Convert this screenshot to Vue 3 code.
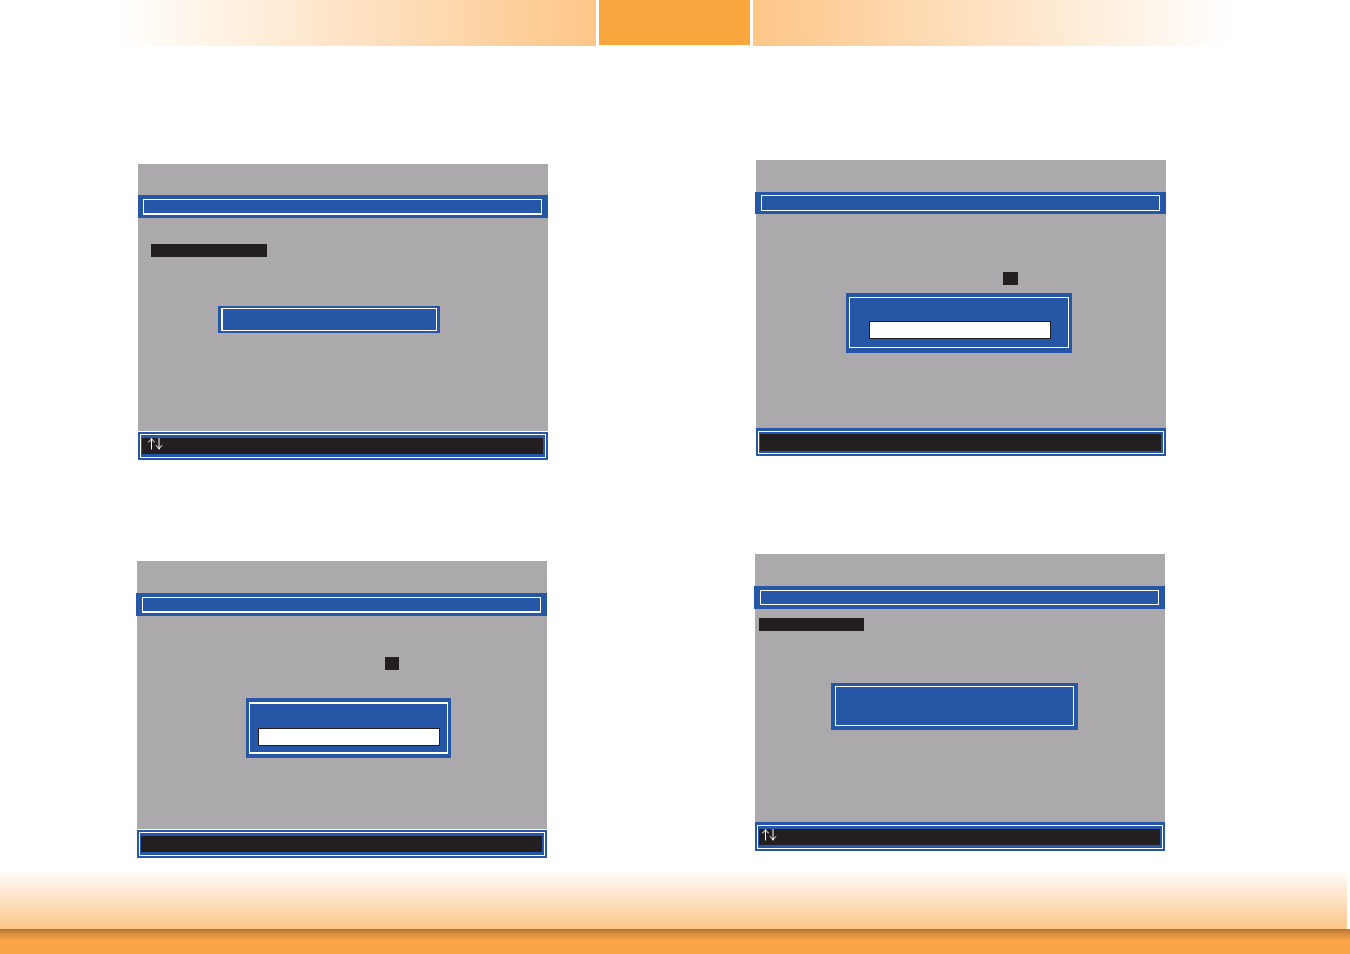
<template>
  <div class="page">
    <!-- Top banner -->
    <header class="banner">
      <div class="banner-fade banner-left"></div>
      <div class="banner-tab"></div>
      <div class="banner-fade banner-right"></div>
    </header>

    <!-- Setup screens -->
    <main class="columns">
      <div v-for="column in columns" :key="column.key" class="column" :class="`column-${column.key}`">
        <section
          v-for="screen in column.screens"
          :key="screen.key"
          class="screen"
          :class="`screen-${screen.key}`"
        >
          <div class="title-bar">
            <div class="title-frame"></div>
          </div>

          <div class="screen-body">
            <div class="highlight"></div>
            <div class="dialog">
              <div class="dialog-frame">
                <input v-if="screen.input" type="text" class="dialog-input" aria-label="Value" />
              </div>
            </div>
          </div>

          <div class="help-bar">
            <div class="help-frame">
              <div class="help-keys">
                <svg
                  v-if="screen.arrows"
                  class="arrows"
                  width="16"
                  height="12"
                  viewBox="0 0 16 12"
                  role="img"
                  aria-label="Up and down"
                >
                  <path d="M4.5 0.3V11.5M1.2 4.1Q3.8 2.8 4.5 0.3Q5.2 2.8 7.8 4.1" />
                  <path d="M12 0V11.2M8.7 7.4Q11.3 8.7 12 11.2Q12.7 8.7 15.3 7.4" />
                </svg>
              </div>
            </div>
          </div>
        </section>
      </div>
    </main>

    <!-- Bottom band -->
    <footer class="page-footer">
      <div class="footer-glow"></div>
      <div class="footer-bar"></div>
    </footer>
  </div>
</template>

<script setup>
const columns = [
  {
    key: 'left',
    screens: [
      { key: 'menu', input: false, arrows: true },
      { key: 'entry', input: true, arrows: false }
    ]
  },
  {
    key: 'right',
    screens: [
      { key: 'prompt', input: true, arrows: false },
      { key: 'message', input: false, arrows: true }
    ]
  }
]
</script>

<style>
body {
  margin: 0;
  background: #ffffff;
}
</style>

<style scoped>
.page {
  display: flex;
  flex-direction: column;
  min-height: 100vh;
  font-family: "Liberation Sans", Arial, sans-serif;
}

.page * {
  box-sizing: border-box;
}

/* Banner */
.banner {
  display: grid;
  grid-template-columns: 1fr 151px 1fr;
  gap: 3px;
  height: 46px;
  padding-right: 1px;
}

.banner-left {
  background: linear-gradient(to right, #ffffff 19%, #fee2c3 60%, #fdc688 100%);
}

.banner-right {
  background: linear-gradient(to left, #ffffff 19%, #fee2c3 60%, #fdc688 100%);
}

.banner-tab {
  height: 45px;
  background: #f9a63f;
}

/* Columns */
.columns {
  display: grid;
  grid-template-columns: 1fr 1fr;
  column-gap: 207px;
  padding: 0 184px 0 137px;
}

.column {
  display: flex;
  flex-direction: column;
}

.column-left {
  gap: 101px;
  padding-top: 118px;
}

.column-right {
  gap: 98px;
  padding-top: 114px;
}

/* Screens */
.screen {
  padding-top: 32px;
  background: #aba9ac;
}

.screen-menu {
  padding-top: 31px;
}

.screen-menu,
.screen-prompt {
  margin-left: 1px;
}

.screen-entry,
.screen-message {
  margin-right: 1px;
}

.title-bar {
  height: 23px;
  margin-left: -1px;
  padding: 4px 6px;
  background: #2657a6;
}

.screen-menu .title-bar {
  margin-left: 0;
  padding-left: 5px;
}

.screen-prompt .title-bar {
  height: 22px;
  padding-top: 3px;
}

.title-frame {
  height: 16px;
  border: 1px solid #ffffff;
}

.screen-menu .title-frame,
.screen-entry .title-frame {
  border-bottom-width: 2px;
}

.screen-message .title-frame {
  height: 15px;
}

.screen-body {
  display: flex;
  flex-direction: column;
  align-items: flex-start;
  min-height: 213px;
}

.screen-prompt .screen-body {
  min-height: 214px;
}

.highlight {
  height: 13px;
  background: #231f20;
}

.screen-menu .highlight {
  width: 116px;
  margin: 26px 0 0 13px;
}

.screen-entry .highlight {
  width: 14px;
  margin: 41px 0 0 248px;
}

.screen-prompt .highlight {
  width: 15px;
  margin: 58px 0 0 247px;
}

.screen-message .highlight {
  width: 105px;
  margin: 9px 0 0 4px;
}

/* Dialogs */
.dialog {
  display: flex;
  background: #2657a6;
}

.dialog-frame {
  flex: 1;
  border: 1px solid #ffffff;
}

.screen-menu .dialog {
  width: 222px;
  height: 27px;
  margin: 49px 0 0 80px;
  padding: 2px 3px;
}

.screen-menu .dialog-frame {
  border-left-width: 2px;
}

.screen-entry .dialog {
  width: 205px;
  height: 60px;
  margin: 28px 0 0 109px;
  padding: 4px 3px;
}

.screen-entry .dialog-frame {
  border-width: 2px 1px;
  padding: 24px 0 0 8px;
}

.screen-prompt .dialog {
  width: 226px;
  height: 60px;
  margin: 8px 0 0 90px;
  padding: 4px 3px 5px;
}

.screen-prompt .dialog-frame {
  padding: 23px 0 0 19px;
}

.screen-message .dialog {
  width: 247px;
  height: 47px;
  margin: 52px 0 0 76px;
  padding: 3px 4px 4px;
}

.dialog-input {
  display: block;
  width: 182px;
  height: 18px;
  padding: 0 4px;
  border: 1px solid #231f20;
  border-radius: 0;
  background: #ffffff;
  font-family: inherit;
  font-size: 12px;
}

/* Help bar */
.help-bar {
  padding: 2px;
  background: #2657a6;
}

.screen-menu .help-bar,
.screen-entry .help-bar {
  border-top: 1px solid #ffffff;
}

.screen-prompt .help-bar,
.screen-message .help-bar {
  padding-top: 3px;
}

.help-frame {
  padding: 3px 2px 3px 1px;
  border: 1px solid #ffffff;
}

.screen-prompt .help-frame {
  padding: 2px 2px 2px 1px;
}

.help-keys {
  height: 16px;
  padding-left: 5px;
  background: #231f20;
}

.screen-prompt .help-keys {
  height: 17px;
}

.screen-message .help-keys {
  padding-left: 2px;
}

.arrows {
  display: block;
  overflow: visible;
  fill: none;
  stroke: #ffffff;
  stroke-width: 1;
}

/* Bottom band */
.page-footer {
  margin-top: auto;
}

.footer-glow {
  height: 59px;
  margin-right: 3px;
  background: linear-gradient(to bottom, #ffffff, #fee2c3 50%, #fdc688);
}

.footer-bar {
  height: 25px;
  background: linear-gradient(to bottom, #b27533, #d88f3e 5px, #faa548 12px);
}
</style>
